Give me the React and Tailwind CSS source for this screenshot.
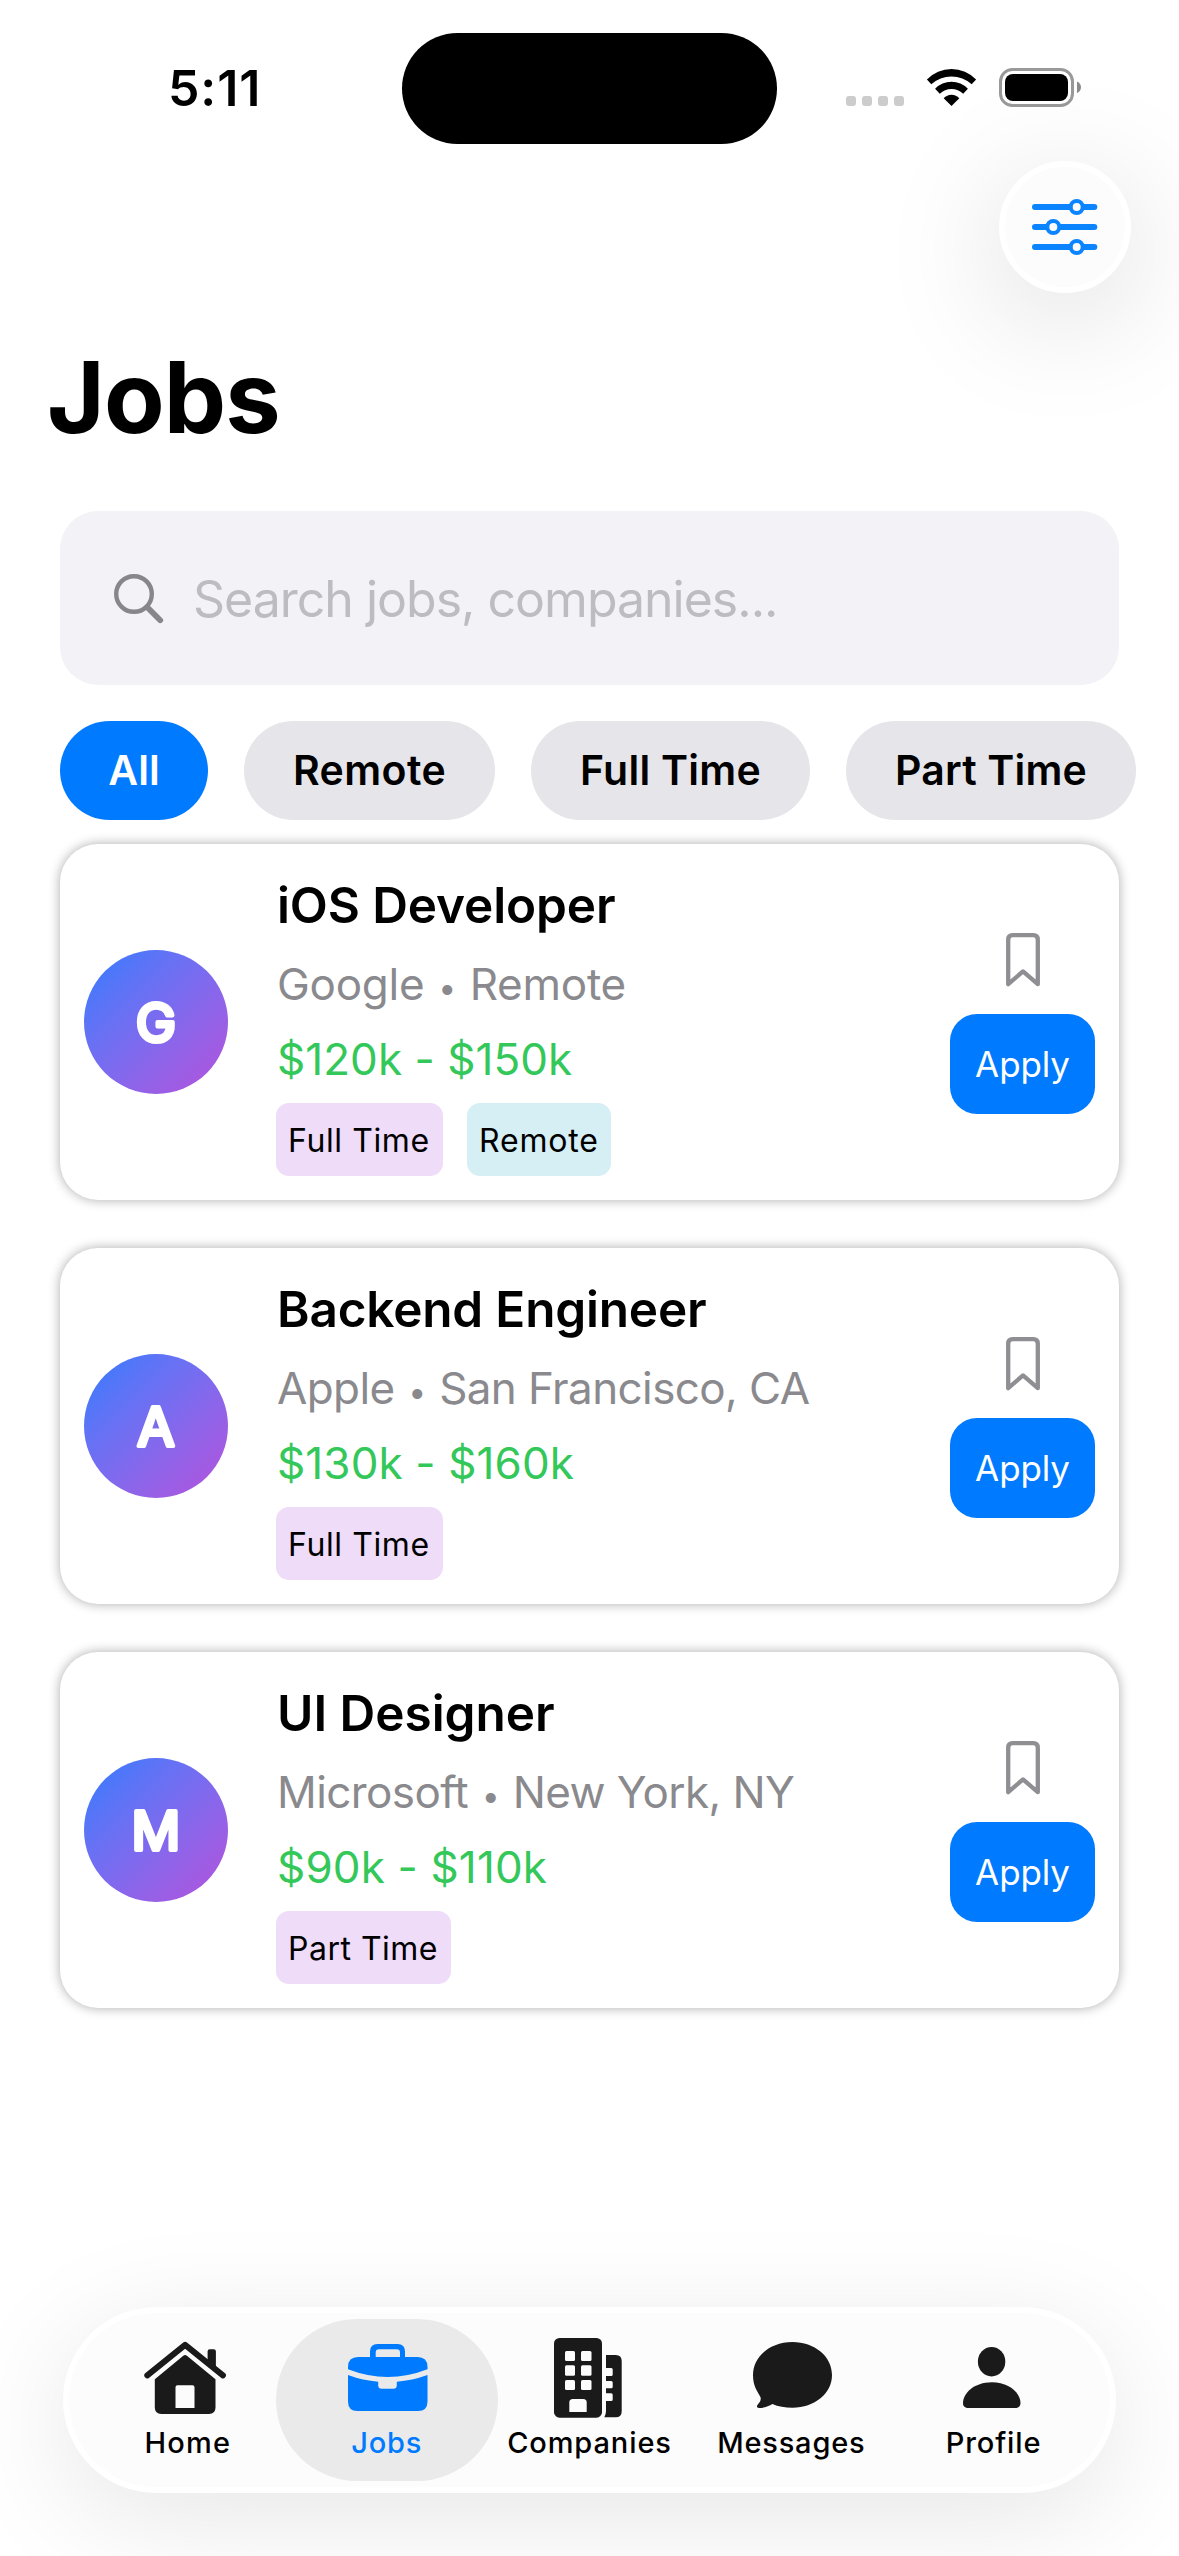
import React from "react";

const FILTERS = [
  { label: "All", active: true, box: "w-[148px] tracking-[0px]" },
  { label: "Remote", box: "w-[251px] tracking-[0.4px]" },
  { label: "Full Time", box: "w-[279px] tracking-[0.25px]" },
  { label: "Part Time", box: "w-[290px] tracking-[0.15px]" },
];

const JOBS = [
  {
    initial: "G",
    title: "iOS Developer",
    titleClass: "tracking-[-0.12px]",
    company: "Google",
    location: "Remote",
    placeClass: "tracking-[-0.25px]",
    pay: "$120k - $150k",
    payClass: "tracking-[0.05px]",
    tags: [
      { label: "Full Time", style: "w-[167px] bg-[#eedcf8] tracking-[0.6px]" },
      { label: "Remote", style: "w-[144px] bg-[#d6eff5] tracking-[0.8px]" },
    ],
  },
  {
    initial: "A",
    title: "Backend Engineer",
    titleClass: "tracking-[-0.19px]",
    company: "Apple",
    location: "San Francisco, CA",
    placeClass: "tracking-[-0.6px]",
    pay: "$130k - $160k",
    payClass: "tracking-[0.12px]",
    tags: [{ label: "Full Time", style: "w-[167px] bg-[#eedcf8] tracking-[0.6px]" }],
  },
  {
    initial: "M",
    title: "UI Designer",
    titleClass: "tracking-[-0.03px]",
    company: "Microsoft",
    location: "New York, NY",
    placeClass: "tracking-[-0.6px]",
    pay: "$90k - $110k",
    payClass: "tracking-[0.15px]",
    tags: [{ label: "Part Time", style: "w-[175px] bg-[#eedcf8] tracking-[0.5px]" }],
  },
];

function WifiIcon() {
  return (
    <svg width="51" height="37" viewBox="0 0 50 37" className="mb-px block" fill="#000">
      <path d="M0.4 10.6A34 34 0 0 1 49.6 10.6L45.2 15.2A30 30 0 0 0 4.8 15.2Z" />
      <path d="M8.6 19.7A22.7 22.7 0 0 1 41.4 19.7L36.7 24.7A17 17 0 0 0 13.3 24.7Z" />
      <path d="M17.2 29.3A10.3 10.3 0 0 1 32.8 29.3L25 37Z" />
    </svg>
  );
}

function BatteryIcon() {
  return (
    <svg width="83" height="39" viewBox="0 0 83 39" className="block">
      <rect x="1.5" y="1.5" width="72" height="36" rx="12" fill="none" stroke="#999" strokeWidth="3" />
      <rect x="6" y="6" width="63" height="27" rx="8" fill="#000" />
      <path d="M78 13.5Q82 15.5 82 19.3T78 25.2Z" fill="#8c8c8c" />
    </svg>
  );
}

function SlidersIcon() {
  return (
    <svg width="66" height="56" viewBox="0 0 66 56" fill="none" stroke="#0a84ff">
      <g strokeWidth="6" strokeLinecap="round">
        <path d="M3 8H62.3M3 28H62.3M3 48H62.3" />
      </g>
      <g strokeWidth="4" fill="#fcfcfc">
        <circle cx="44.7" cy="8" r="6" />
        <circle cx="21.3" cy="28" r="6" />
        <circle cx="44.7" cy="48" r="6" />
      </g>
    </svg>
  );
}

function SearchIcon() {
  return (
    <svg width="50" height="50" viewBox="0 0 50 50" fill="none" stroke="#86868b" className="mt-px block">
      <circle cx="20" cy="20" r="17.8" strokeWidth="4.4" />
      <path d="M33.3 33.3L46.2 46.2" strokeWidth="5.8" strokeLinecap="round" />
    </svg>
  );
}

function BookmarkIcon() {
  return (
    <svg width="34" height="54" viewBox="0 0 34 54" className="block">
      <path
        d="M2.2 51.2V6.7Q2.2 2.2 6.7 2.2H27.3Q31.8 2.2 31.8 6.7V51.2L17 38.4Z"
        fill="none"
        stroke="#8e8e93"
        strokeWidth="4.3"
        strokeLinejoin="round"
      />
    </svg>
  );
}

function HomeIcon() {
  return (
    <svg width="83" height="74" viewBox="0 0 83 74" fill="#1a1a1a" className="ml-px">
      <path d="M3.3 34.3L41.1 3.9L78.9 34.3" fill="none" stroke="#1a1a1a" strokeWidth="6" strokeLinecap="round" strokeLinejoin="round" />
      <path d="M63.6 22V10.5Q63.6 8.3 65.8 8.3H69.7Q71.9 8.3 71.9 10.5V29Z" />
      <path
        fillRule="evenodd"
        d="M10.8 38.3L39.3 14.8Q41.1 13.4 42.9 14.8L71.5 38.3V66.5Q71.5 73 65 73H17.3Q10.8 73 10.8 66.5ZM33.5 44.3Q31.5 44.3 31.5 46.3V67H50.5V46.3Q50.5 44.3 48.5 44.3Z"
      />
    </svg>
  );
}

function BriefcaseIcon() {
  return (
    <svg width="80" height="69" viewBox="0 0 80 69" fill="#007aff" className="ml-[2px]">
      <path d="M22 14.5V8.5Q22 1 29.5 1H49.5Q57 1 57 8.5V14.5H52V9.5Q52 6.3 48.8 6.3H30.9Q27.7 6.3 27.7 9.5V14.5Z" />
      <path d="M0 26.3V24Q0 14 10 14H69.5Q79.5 14 79.5 24V26.3Q39.75 41.7 0 26.3Z" />
      <path d="M0 32Q15 37.6 30.2 38.7V42.2Q30.2 45.7 33.7 45.7H45.3Q48.8 45.7 48.8 42.2V38.7Q64 37.6 79.5 32V58.5Q79.5 68 70 68H9.5Q0 68 0 58.5Z" />
    </svg>
  );
}

function BuildingIcon() {
  return (
    <svg width="68" height="80" viewBox="0 0 68 80" fill="#1a1a1a">
      <rect width="48" height="79.7" rx="5.5" />
      <path d="M52 17H61.7Q67.7 17 67.7 23V73.3Q67.7 79.3 61.7 79.3H50.3Q52 76.5 52 73V63H57.2Q58.7 63 58.7 61.5V56.8Q58.7 55.3 57.2 55.3H52V50.3H57.2Q58.7 50.3 58.7 48.8V44.5Q58.7 43 57.2 43H52V38H57.2Q58.7 38 58.7 36.5V31.5Q58.7 30 57.2 30H52Z" />
      <g fill="#fcfcfc">
        <rect x="11" y="13" width="10" height="10" rx="1.5" />
        <rect x="27" y="13" width="10.5" height="10" rx="1.5" />
        <rect x="11" y="27.3" width="10" height="10.4" rx="1.5" />
        <rect x="27" y="27.3" width="10.5" height="10.4" rx="1.5" />
        <rect x="11" y="42" width="10" height="10" rx="1.5" />
        <rect x="27" y="42" width="10.5" height="10" rx="1.5" />
        <path d="M15.3 74V64.5Q15.3 61 18.8 61H29.2Q32.7 61 32.7 64.5V74Z" />
      </g>
    </svg>
  );
}

function MessageIcon() {
  return (
    <svg width="79" height="72" viewBox="0 0 79 72" fill="#1a1a1a" className="ml-[4px]">
      <path d="M39.5 0C61.5 0 79 14.3 79 33C79 51.5 61.5 65.7 39.5 65.7C32 65.7 25 64.5 19.4 62C16 64 11 66.2 6 66C3.8 66 3.3 64 4.8 62.4C7 60 8.4 57.5 7.4 55C4.8 49.5 0 45 0 33C0 14.3 17.5 0 39.5 0Z" />
    </svg>
  );
}

function ProfileIcon() {
  return (
    <svg width="58" height="61" viewBox="0 0 58 61" fill="#1a1a1a">
      <ellipse cx="28.6" cy="14.7" rx="13.7" ry="14.7" />
      <path d="M0 56C0 46.5 11 35.3 28.75 35.3C46.5 35.3 57.5 46.5 57.5 56C57.5 59.5 55.5 61 52 61H5.5C2 61 0 59.5 0 56Z" />
    </svg>
  );
}

const TABS = [
  { label: "Home", Icon: HomeIcon, text: "pl-[6px] tracking-[1.2px]" },
  { label: "Jobs", Icon: BriefcaseIcon, active: true, text: "tracking-[0.8px]" },
  { label: "Companies", Icon: BuildingIcon, text: "pl-[2px] tracking-[0.9px]" },
  { label: "Messages", Icon: MessageIcon, text: "pl-[2px] tracking-[0.8px]" },
  { label: "Profile", Icon: ProfileIcon, text: "pl-[3px] tracking-[0.85px]" },
];

function StatusBar() {
  return (
    <div className="grid h-[161px] grid-cols-[402px_375px_402px] items-start">
      <div className="pt-[58px] pl-[168px] text-[50px] leading-[60px] font-semibold tracking-[0.9px]">5:11</div>
      <div className="mt-[33px] h-[111px] rounded-full bg-black" />
      <div className="mt-[68px] flex h-[39px] items-end gap-[22px] pl-[69px]">
        <div className="mb-px flex gap-[6px]">
          {[0, 1, 2, 3].map((i) => (
            <span key={i} className="size-[10px] rounded-[3px] bg-[#ccc]" />
          ))}
        </div>
        <WifiIcon />
        <BatteryIcon />
      </div>
    </div>
  );
}

// The round-joined stroke gives the initial its soft, rounded corners.
function Avatar({ initial }) {
  return (
    <div className="size-[144px] shrink-0 self-center rounded-full bg-linear-to-br from-[#1f7cff] via-[#7b6bef] to-[#b44fdb]">
      <svg width="144" height="144" viewBox="0 0 144 144">
        <text
          x="72"
          y="92"
          textAnchor="middle"
          fill="#fff"
          stroke="#fff"
          strokeWidth="4.2"
          strokeLinejoin="round"
          className="font-['Inter',sans-serif] text-[54px] font-normal"
        >
          {initial}
        </text>
      </svg>
    </div>
  );
}

function JobCard({ job }) {
  return (
    <article className="flex h-[356px] rounded-[38px] bg-white px-[24px] shadow-[0_0_12px_rgba(0,0,0,0.33)]">
      <Avatar initial={job.initial} />
      <div className="ml-[48px] flex-1 pt-[28px]">
        <h2 className={"h-[66px] pl-px text-[49.5px] leading-[66px] font-semibold " + job.titleClass}>{job.title}</h2>
        <p className={"mt-[19px] h-[54px] pl-px text-[44px] leading-[54px] text-[#8a8a8e] " + job.placeClass}>
          {job.company} <span className="relative -top-[1.5px] inline-block w-[21px] text-center text-[32px] leading-none">•</span> {job.location}
        </p>
        <p className={"mt-[21px] h-[54px] pl-px text-[44px] leading-[54px] text-[#34c759] " + job.payClass}>{job.pay}</p>
        <div className="mt-[17px] flex gap-[24px]">
          {job.tags.map((tag) => (
            <span key={tag.label} className={"h-[73px] rounded-[13px] pl-[12px] text-[32px] leading-[75px] whitespace-nowrap " + tag.style}>
              {tag.label}
            </span>
          ))}
        </div>
      </div>
      <div className="flex w-[145px] flex-col items-center pt-[89px]">
        <BookmarkIcon />
        <button className="mt-[27px] h-[100px] w-[145px] rounded-[27px] bg-[#007aff] text-[35px] tracking-[-0.1px] text-white">Apply</button>
      </div>
    </article>
  );
}

export default function App() {
  return (
    <div className="flex h-[2556px] w-[1179px] flex-col overflow-hidden bg-white font-['Inter',sans-serif] text-black">
      <StatusBar />
      <div className="flex justify-end pr-[48px]">
        <button className="flex size-[132px] items-center justify-center rounded-full border-[6px] border-white bg-[#fcfcfc] shadow-[0_24px_125px_rgba(0,0,0,0.15)]">
          <SlidersIcon />
        </button>
      </div>
      <h1 className="mt-[44px] h-[120px] pl-[47px] text-[99px] leading-[120px] font-bold tracking-[-0.9px]">Jobs</h1>

      <div className="mx-[60px] mt-[54px] flex h-[174px] items-center gap-[29px] rounded-[38px] bg-[#f2f2f7] pl-[54px]">
        <SearchIcon />
        <span className="pt-[2px] text-[50px] tracking-[-1px] text-[#bcbcc1]">Search jobs, companies...</span>
      </div>

      <div className="mt-[36px] flex gap-[36px] pl-[60px]">
        {FILTERS.map((f) => (
          <button
            key={f.label}
            className={
              "h-[99px] shrink-0 rounded-full text-[41px] font-semibold whitespace-nowrap " +
              f.box +
              (f.active ? " bg-[#007aff] text-white" : " bg-[#e5e5ea] text-black")
            }
          >
            {f.label}
          </button>
        ))}
      </div>

      <main className="mt-[24px] flex flex-col gap-[48px] px-[60px]">
        {JOBS.map((job) => (
          <JobCard key={job.title} job={job} />
        ))}
      </main>

      <nav className="mx-[63px] mt-auto mb-[63px] flex h-[186px] rounded-full border-[6px] border-white bg-[#fcfcfc] pr-[17px] pl-[15px] py-[6px] shadow-[0_24px_115px_rgba(0,0,0,0.1)]">
        {TABS.map(({ label, Icon, active, text }) => (
          <div
            key={label}
            className={
              "-mx-[10px] flex h-[162px] flex-1 flex-col items-center rounded-full " +
              (active ? "bg-[#eaeaea] text-[#007aff]" : "")
            }
          >
            <div className="flex h-[105.5px] items-center pt-[12px]">
              <Icon />
            </div>
            <span className={"text-[29px] leading-[36px] font-medium " + text}>{label}</span>
          </div>
        ))}
      </nav>
    </div>
  );
}
